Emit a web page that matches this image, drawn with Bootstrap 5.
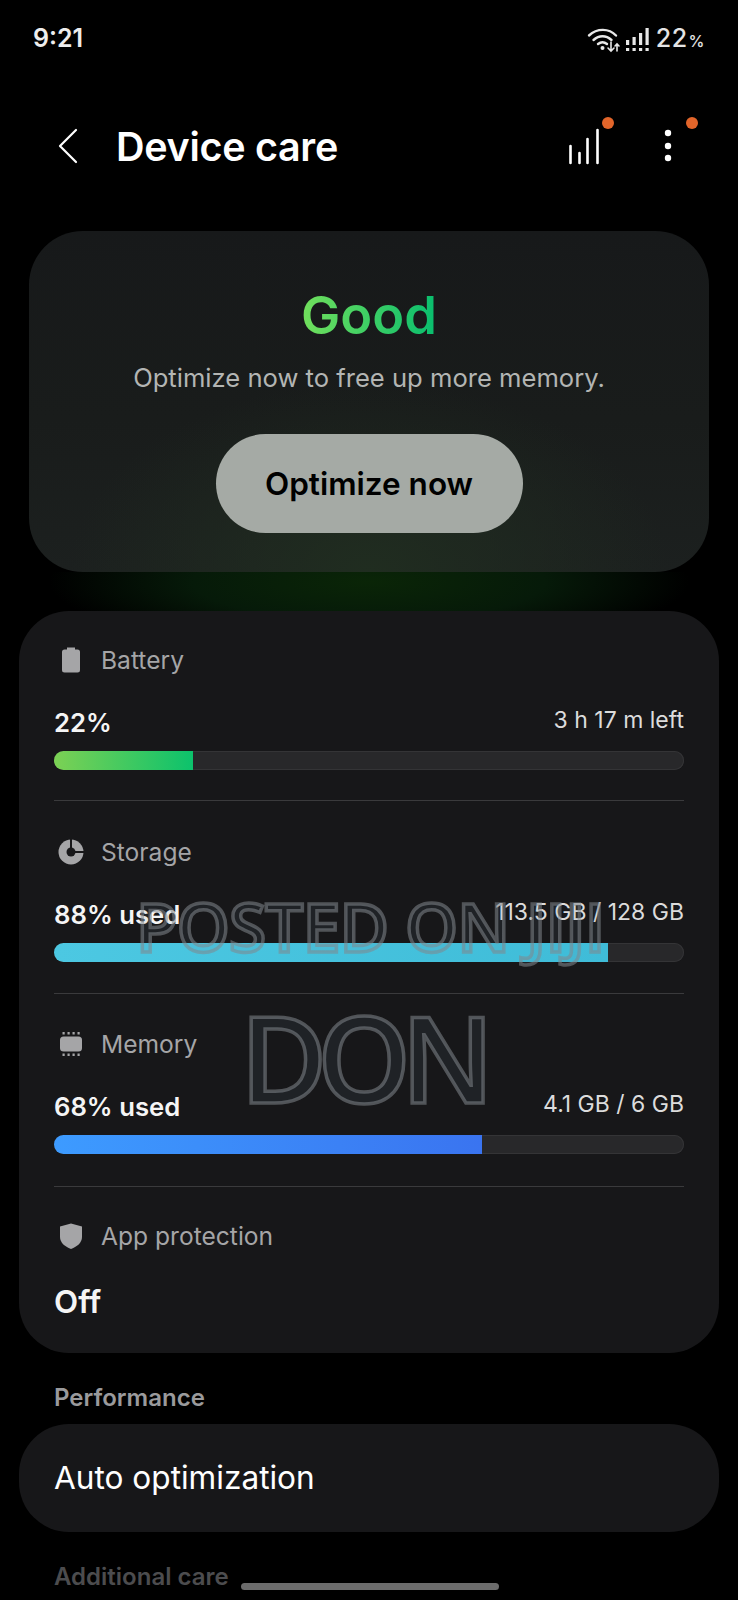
<!DOCTYPE html>
<html lang="en">
<head>
  <meta charset="UTF-8">
  <meta name="viewport" content="width=device-width, initial-scale=1.0">
  <title>Device care</title>
  <link rel="stylesheet" href="https://cdn.jsdelivr.net/npm/bootstrap@5.3.0/dist/css/bootstrap.min.css">
  <style>
    html, body { background: #000; }
    body { font-family: Inter, "Noto Sans", sans-serif; color: #fff; height: 1600px; overflow: hidden; position: relative; }

    .status-bar { height: 77px; padding: 20px 33px 0 33px; }
    .status-time { font-size: 25px; font-weight: 600; color: #ededed; line-height: 36px; }
    .status-batt { font-size: 25px; font-weight: 500; color: #e4e4e4; line-height: 36px; letter-spacing: .5px; margin-left: 6px; }
    .status-batt span { font-size: 16px; margin-left: 1px; }
    .signal-icon { margin-left: 4px; }

    .app-header { height: 115px; padding: 23px 0 0 57px; }
    .app-title { font-size: 39.500px; font-weight: 600; margin: 3px 0 0 37px; line-height: 1; letter-spacing: -.3px; }
    .header-icon { position: relative; width: 40px; height: 40px; }
    .header-dot { position: absolute; width: 12px; height: 12px; border-radius: 50%; background: #e2652a; }

    .hero-wrap { padding: 39px 29px; background: radial-gradient(ellipse 320px 70px at 50% 25%, #0a2507 0%, #061a09 55%, #000 100%) bottom / 100% 39px no-repeat; }
    .hero-card { height: 341px; border-radius: 54px; background: radial-gradient(ellipse 300px 190px at 50% 100%, #202d20 0%, rgba(30, 38, 32, 0) 100%), linear-gradient(180deg, #17191a 0%, #191c1b 55%, #1c201f 100%); padding-top: 52px; }
    .hero-title { font-size: 52.500px; font-weight: 600; line-height: 64px; margin: 0; background: linear-gradient(90deg, #72e05c, #08bd6e); -webkit-background-clip: text; background-clip: text; color: transparent; display: inline-block; }
    .hero-text { font-size: 25.600px; color: #b3b5b3; margin: 14px 0 0; line-height: 34px; }
    .btn-optimize { width: 307px; height: 99px; margin-top: 39px; border: 0; border-radius: 50px; background: #a5aaa5; color: #000; font-size: 31.500px; font-weight: 600; }
    .btn-optimize:hover { background: #a5aaa5; color: #000; }

    .panel { background: #171719; margin: 0 19px; }
    .panel-main { border-radius: 50px; height: 742px; padding: 0 35px; }
    .stat-block { height: 193px; padding-top: 35px; border-bottom: 1px solid #3a3a3c; }
    .stat-block:first-child { height: 190px; padding-top: 33px; }
    .stat-block:nth-child(3) { padding-top: 34px; }
    .stat-block:last-child { padding-top: 33px; border-bottom: 0; }
    .stat-label { font-size: 24.600px; color: #a5a5a7; line-height: 32px; gap: 17px; }
    .stat-icon { width: 26px; height: 32px; flex: none; margin-left: 4px; }
    .stat-row { margin-top: 27px; line-height: 34px; }
    .stat-value { font-size: 25.700px; font-weight: 600; color: #f5f5f5; }
    .value-big { font-size: 31.400px; }
    .stat-detail { font-size: 23px; color: #dcdcdc; margin-bottom: 6px; }
    .row-big { margin-top: 33px; }
    .usage-bar { height: 19px; margin-top: 8px; border-radius: 9.500px; background: #28282a; box-shadow: inset 0 0 0 1px #343436; overflow: hidden; }
    .usage-fill { height: 100%; }
    .fill-green { background: linear-gradient(90deg, #7cd154, #0cc26c); }
    .fill-cyan { background: linear-gradient(90deg, #4cc8e2, #3fbcd8); }
    .fill-blue { background: linear-gradient(90deg, #3d9bff, #3a74f0); }

    .section-head { font-size: 24px; font-weight: 600; color: #9a9a9c; margin: 30px 0 0 54px; line-height: 30px; }
    .panel-auto { border-radius: 50px; height: 108px; padding: 0 35px; margin-top: 11px; font-size: 31.600px; color: #fff; }
    .section-fade { color: #4c4c4e; margin-top: 30px; }

    .watermark { position: absolute; color: rgba(110, 140, 160, .1); -webkit-text-stroke: 3.500px rgba(130, 135, 140, .55); font-family: "Open Sans", sans-serif; font-weight: 600; line-height: 1; white-space: nowrap; }
    .wm-posted { left: 136px; top: 893px; font-size: 67.500px; letter-spacing: -.8px; }
    .wm-don { left: 240px; top: 998px; font-size: 119px; letter-spacing: -10px; }
    .home-bar { position: absolute; left: 241px; top: 1583px; width: 258px; height: 7px; border-radius: 4px; background: #6c6c6c; }
  </style>
</head>
<body>

<!-- Status bar -->
<div class="status-bar d-flex justify-content-between align-items-start">
  <div class="status-time">9:21</div>
  <div class="d-flex align-items-center">
    <svg width="34" height="26" viewBox="0 0 34 26" fill="none" stroke="#e8e8e8" stroke-linecap="round">
      <path d="M2 8.500C10 1 22 1 29 8.500" stroke-width="2.400"/>
      <path d="M6.500 13C12 8 19 8 24.500 13" stroke-width="2.400"/>
      <path d="M11 17C14 14.600 17 14.600 20 17" stroke-width="2.400"/>
      <circle cx="15.500" cy="21" r="2" fill="#e8e8e8" stroke="none"/>
      <path d="M24 15v9M21 21l3 3 3-3M30 24v-7M28 19l2-2 2 2" stroke-width="1.600"/>
    </svg>
    <svg width="25" height="26" viewBox="0 0 25 26" fill="#e8e8e8" class="signal-icon">
      <rect x="1" y="13" width="3.200" height="5"/><rect x="7.500" y="10" width="3.200" height="8"/><rect x="14" y="6" width="3.200" height="12"/><rect x="20.500" y="1" width="3.200" height="17"/>
      <rect x="1" y="21" width="3.200" height="3"/><rect x="7.500" y="21" width="3.200" height="3"/><rect x="14" y="21" width="3.200" height="3"/><rect x="20.500" y="21" width="3.200" height="3"/>
    </svg>
    <div class="status-batt">22<span>%</span></div>
  </div>
</div>

<!-- Header -->
<div class="app-header d-flex align-items-center">
  <svg width="22" height="36" viewBox="0 0 22 36" fill="none" stroke="#fff" stroke-width="2.200" stroke-linecap="round" stroke-linejoin="round"><path d="M19 2 3 18l16 16"/></svg>
  <h1 class="app-title">Device care</h1>
  <div class="ms-auto header-icon">
    <svg width="40" height="40" viewBox="0 0 40 40" fill="none" stroke="#fff" stroke-width="2.600" stroke-linecap="round"><path d="M6.500 37V20M15.500 37V27M23.500 37V13M33.500 37V4"/></svg>
    <span class="header-dot" style="left:38px;top:-9px"></span>
  </div>
  <div class="header-icon" style="margin-left:44px;margin-right:50px">
    <svg width="40" height="40" viewBox="0 0 40 40" fill="#fff"><circle cx="20" cy="7" r="3.200"/><circle cx="20" cy="20" r="3.200"/><circle cx="20" cy="32" r="3.200"/></svg>
    <span class="header-dot" style="left:38px;top:-9px"></span>
  </div>
</div>

<!-- Status card -->
<div class="hero-wrap">
  <div class="hero-card text-center">
    <h2 class="hero-title">Good</h2>
    <p class="hero-text">Optimize now to free up more memory.</p>
    <button type="button" class="btn btn-optimize">Optimize now</button>
  </div>
</div>

<!-- Battery, storage, memory, protection -->
<div class="panel panel-main">
  <div class="stat-block">
    <div class="stat-label d-flex align-items-center">
      <svg class="stat-icon" viewBox="0 0 26 32" fill="#a5a5a7"><path d="M9 3.500h8v2h2.500a2.500 2.500 0 0 1 2.500 2.500v18a2.500 2.500 0 0 1-2.500 2.500h-13A2.500 2.500 0 0 1 4 26V8a2.500 2.500 0 0 1 2.500-2.500H9z"/></svg>
      Battery
    </div>
    <div class="stat-row d-flex justify-content-between align-items-center">
      <span class="stat-value">22%</span><span class="stat-detail">3 h 17 m left</span>
    </div>
    <div class="usage-bar"><div class="usage-fill fill-green" style="width:22%"></div></div>
  </div>
  <div class="stat-block">
    <div class="stat-label d-flex align-items-center">
      <svg class="stat-icon" viewBox="0 0 26 32"><circle cx="13" cy="16" r="12.500" fill="#a5a5a7"/><path d="M13 16V3M13 16h13" stroke="#171719" stroke-width="2" fill="none"/><circle cx="13" cy="16" r="4.500" fill="#171719"/></svg>
      Storage
    </div>
    <div class="stat-row d-flex justify-content-between align-items-center">
      <span class="stat-value">88% used</span><span class="stat-detail">113.5 GB / 128 GB</span>
    </div>
    <div class="usage-bar"><div class="usage-fill fill-cyan" style="width:88%"></div></div>
  </div>
  <div class="stat-block">
    <div class="stat-label d-flex align-items-center">
      <svg class="stat-icon" viewBox="0 0 26 32" fill="#a5a5a7"><rect x="2" y="8.500" width="22" height="15" rx="3.500"/><path d="M4.500 4h2.200v2.500H4.500zM9.500 4h2.200v2.500H9.500zM14.500 4h2.200v2.500h-2.200zM19.500 4h2.200v2.500h-2.200zM4.500 25.500h2.200V28H4.500zM9.500 25.500h2.200V28H9.500zM14.500 25.500h2.200V28h-2.200zM19.500 25.500h2.200V28h-2.200z"/></svg>
      Memory
    </div>
    <div class="stat-row d-flex justify-content-between align-items-center">
      <span class="stat-value">68% used</span><span class="stat-detail">4.1 GB / 6 GB</span>
    </div>
    <div class="usage-bar"><div class="usage-fill fill-blue" style="width:68%"></div></div>
  </div>
  <div class="stat-block">
    <div class="stat-label d-flex align-items-center">
      <svg class="stat-icon" viewBox="0 0 26 32" fill="#a5a5a7"><path d="M13 3.500 24 6.500v10.500c0 5.500-4.500 9.500-11 12-6.500-2.500-11-6.500-11-12V6.500z"/></svg>
      App protection
    </div>
    <div class="stat-row row-big"><span class="stat-value value-big">Off</span></div>
  </div>
</div>

<!-- Performance -->
<h3 class="section-head">Performance</h3>
<div class="panel panel-auto d-flex align-items-center">Auto optimization</div>
<h3 class="section-head section-fade">Additional care</h3>

<!-- Overlays -->
<div class="watermark wm-posted">POSTED ON JIJI</div>
<div class="watermark wm-don">DON</div>
<div class="home-bar"></div>

<script src="https://cdn.jsdelivr.net/npm/bootstrap@5.3.0/dist/js/bootstrap.bundle.min.js"></script>
</body>
</html>
